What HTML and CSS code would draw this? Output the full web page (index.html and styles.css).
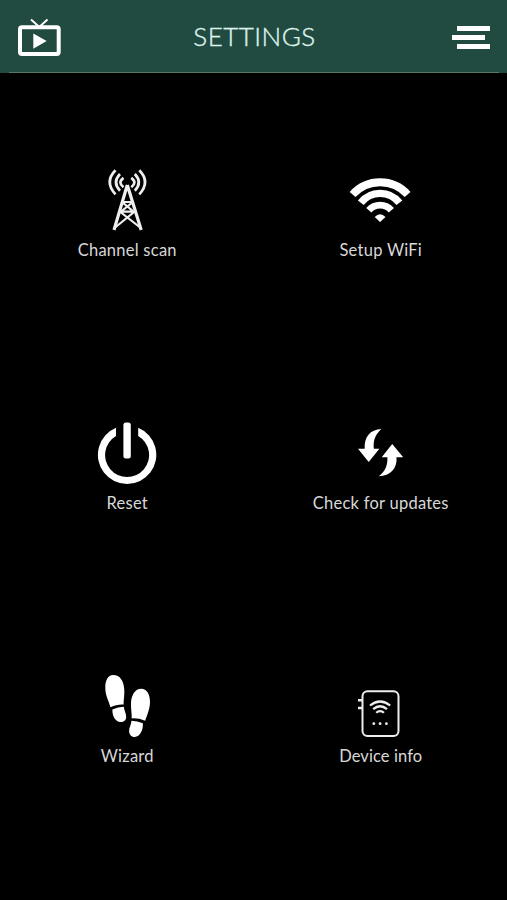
FILE: index.html
```html
<!DOCTYPE html>
<html lang="en">
<head>
    <meta charset="UTF-8">
    <meta name="viewport" content="width=device-width, initial-scale=1.0">
    <title>Settings</title>
    <link rel="stylesheet" href="styles.css">
</head>
<body>
    <header class="header">
        <svg class="tv-icon" viewBox="18 18 43 39">
            <path d="M31 19.5L39.3 27L47.5 19.5" fill="none" stroke="#fff" stroke-width="2"/>
            <rect x="20" y="27.3" width="38.7" height="26.8" rx="2" fill="none" stroke="#fff" stroke-width="4"/>
            <path d="M33.3 33.5L46.7 41L33.3 48.7Z" fill="#fff"/>
        </svg>
        <h1 class="title">SETTINGS</h1>
        <div class="menu">
            <span class="menu-bar"></span>
            <span class="menu-bar shifted"></span>
            <span class="menu-bar"></span>
        </div>
    </header>

    <main class="settings">
        <div class="item">
            <svg class="icon" viewBox="0 0 64 64" fill="none" stroke="#eee">
                <path d="M32.3 17L19 62M32.3 17L46.2 62M31 18.5H33.7" stroke-width="3.2"/>
                <path d="M27 34L39 44L19.5 60M38 34L25.5 44L45.8 60M28 34H37M25 43.7H40" stroke-width="2.2"/>
                <path d="M20.5 2.3Q9 14 20.5 26.3M25 6Q17 14.3 25 22.8M28.5 9.8Q22.3 14.5 28.5 19.3M44.3 2.3Q55.8 14 44.3 26.3M39.8 6Q47.8 14.3 39.8 22.8M36.3 9.8Q42.5 14.5 36.3 19.3" stroke-width="2.7"/>
            </svg>
            <span class="label">Channel scan</span>
        </div>
        <div class="item">
            <svg class="icon" viewBox="0 0 64 64" fill="none" stroke="#fff">
                <path d="M4.6 26.5A37 37 0 0 1 59.6 26.5" stroke-width="7.8"/>
                <path d="M12.8 34.8A24.5 24.5 0 0 1 51.4 34.8" stroke-width="7.4"/>
                <path d="M20.8 42.3A15 15 0 0 1 43.4 42.3" stroke-width="6.8"/>
                <path d="M26.7 48.9Q32.1 43.5 37.5 48.9L32.1 54Z" fill="#fff" stroke="none"/>
            </svg>
            <span class="label">Setup WiFi</span>
        </div>
        <div class="item">
            <svg class="icon" viewBox="0 0 64 64" fill="#fff">
                <path d="M21 6.8A29.2 29.2 0 1 0 43.2 6.8V15A22 22 0 1 1 21 15Z"/>
                <rect x="28.4" y="1.4" width="7.4" height="36" rx="2.5"/>
            </svg>
            <span class="label">Reset</span>
        </div>
        <div class="item">
            <svg class="icon" viewBox="0 0 64 64" fill="#fff">
                <path d="M33.4 8C22 8.5 16 16 16.7 27.7H10L20.7 41L31.4 27.7H25.8C25 19 27.5 13.5 33.4 8Z"/>
                <path d="M44.2 23L33.7 36.3H39.4C39.8 44.5 37 51 30.7 55.3C42.5 55 49.5 47 48.5 36.3H55.2Z"/>
            </svg>
            <span class="label">Check for updates</span>
        </div>
        <div class="item">
            <svg class="icon" viewBox="0 0 64 64" fill="#fff">
                <path d="M18.3 1C12.5 1 10.3 7 10.3 13.5C10.3 22 13.5 26 15.5 33.3C20 31.2 24 30.3 28.7 30.6C28.5 26 29.5 22.5 29.3 16C28.9 7 25 1 18.3 1Z"/>
                <path d="M17.4 35.5Q23 32.8 28.8 32.8C29.2 37 31.2 39 31.2 43C31.2 46.5 28.5 48.3 25.5 48.1C20 47.5 17.3 42 17.4 35.5Z"/>
                <path d="M46.2 14.7C40 14.7 36.5 21 36 28.5C35.7 35 37 39.5 36.7 44.4Q43.5 44 50.2 46.8C52 41 55 35 55 28C55 20.5 52 14.8 46.2 14.7Z"/>
                <path d="M36.5 46.8Q42.5 46.8 47.9 49.3C48.3 56 45 62.7 39.8 63.1C36.5 63.3 34 60.5 34.1 56.8C34.2 53 36.2 51 36.5 46.8Z"/>
            </svg>
            <span class="label">Wizard</span>
        </div>
        <div class="item">
            <svg class="icon" viewBox="0 0 64 64" fill="none" stroke="#eee">
                <rect x="14.5" y="17.2" width="36" height="44.8" rx="5" stroke-width="2"/>
                <path d="M10 26.3H14.5M10 34H14.5" stroke-width="2.4"/>
                <path d="M22 31.5Q32.1 23.5 42.2 31.5M25.2 35.2Q32.1 29.3 39 35.2M28.2 38.8Q32.1 35.3 36 38.8" stroke-width="2.2"/>
                <g fill="#eee" stroke="none">
                    <circle cx="25.8" cy="49.7" r="1.4"/>
                    <circle cx="32.1" cy="49.7" r="1.4"/>
                    <circle cx="38.4" cy="49.7" r="1.4"/>
                </g>
            </svg>
            <span class="label tight">Device info</span>
        </div>
    </main>
</body>
</html>
```

FILE: styles.css
```css
body {
    margin: 0;
    min-height: 100vh;
    background-color: #000;
    font-family: Lato, sans-serif;
    color: #fff;
}
.header {
    display: flex;
    justify-content: space-between;
    align-items: center;
    height: 73px;
    padding: 0 17px 0 18px;
    box-sizing: border-box;
    background: linear-gradient(#5d7665, #5d7665) 9px 72px / 490px 1px no-repeat #214a40;
}
.tv-icon {
    width: 43px;
    height: 39px;
    margin-top: 2px;
}
.title {
    margin: 0 4px 2px 0;
    font-size: 26px;
    font-weight: 300;
    line-height: 30px;
    letter-spacing: 0.5px;
    color: #dcf2ea;
    -webkit-text-stroke: 0.4px #dcf2ea;
}
.menu {
    display: flex;
    flex-direction: column;
    gap: 4px;
    width: 38px;
    margin-top: 1px;
}
.menu-bar {
    width: 33px;
    height: 5px;
    margin-left: 5px;
    background-color: #fff;
}
.menu-bar.shifted {
    margin-left: 0;
}
.settings {
    display: grid;
    grid-template-columns: 1fr 1fr;
    grid-auto-rows: 253px;
}
.item {
    display: flex;
    flex-direction: column;
    align-items: center;
    padding-top: 95px;
}
.icon {
    width: 64px;
    height: 64px;
}
.label {
    margin: 8px 0 0 1px;
    font-size: 16.5px;
    line-height: 20px;
    letter-spacing: 0.25px;
    color: #d8d8d8;
    white-space: nowrap;
}
.label.tight {
    letter-spacing: 0.1px;
}
```
